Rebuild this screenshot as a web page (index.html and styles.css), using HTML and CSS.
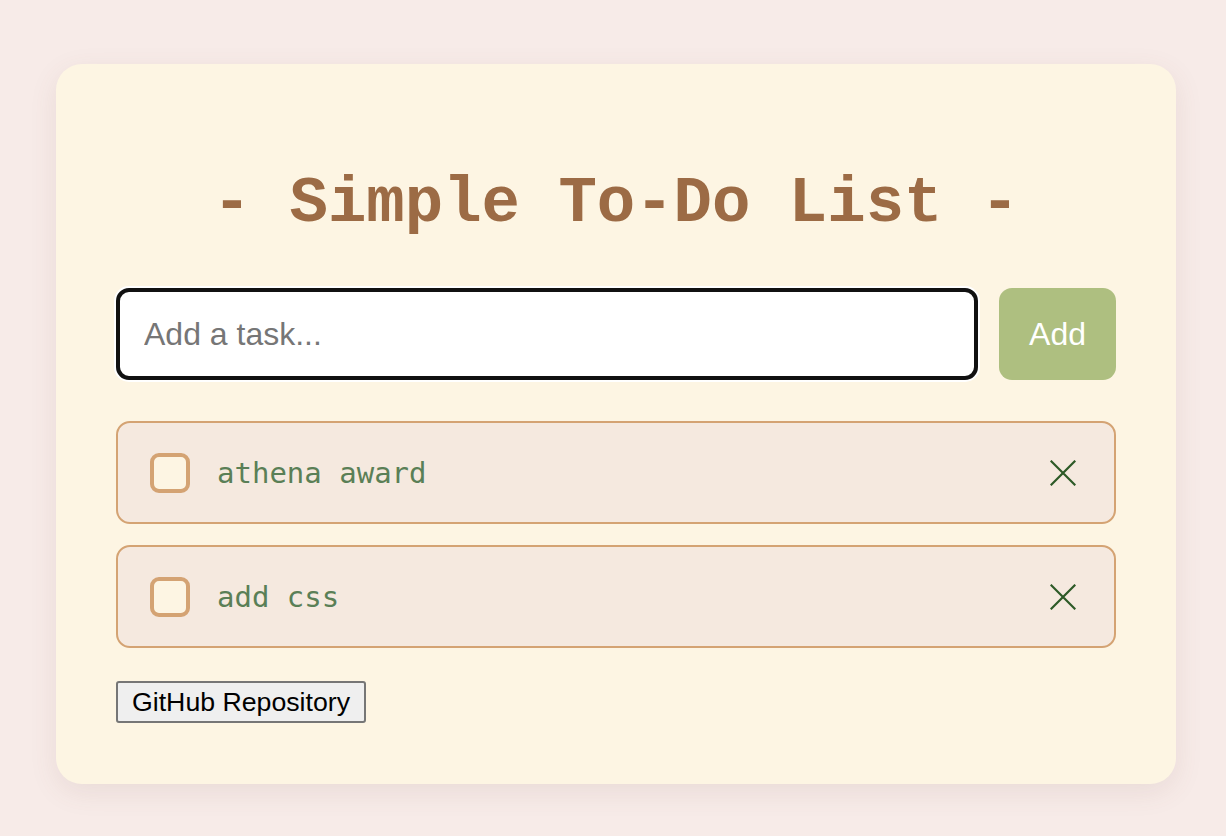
FILE: index.html
```html
<!DOCTYPE html>
<html lang="en">
<head>
<meta charset="utf-8">
<title>Simple To-Do List</title>
<link rel="stylesheet" href="styles.css">
</head>
<body>
<main class="card">
  <h1 class="title">- Simple To-Do List -</h1>
  <form class="add-row" onsubmit="return false">
    <input class="task-input" type="text" placeholder="Add a task...">
    <button class="add-btn" type="submit">Add</button>
  </form>
  <ul class="tasks">
    <li class="task">
      <span class="check"></span>
      <span class="task-text">athena award</span>
      <button class="del" aria-label="Delete">
        <svg viewBox="0 0 26 26" width="26" height="26"><path d="M1.5 1.5L24.5 24.5M24.5 1.5L1.5 24.5" stroke="#2d5a27" stroke-width="2.2" stroke-linecap="square" fill="none"/></svg>
      </button>
    </li>
    <li class="task">
      <span class="check"></span>
      <span class="task-text">add css</span>
      <button class="del" aria-label="Delete">
        <svg viewBox="0 0 26 26" width="26" height="26"><path d="M1.5 1.5L24.5 24.5M24.5 1.5L1.5 24.5" stroke="#2d5a27" stroke-width="2.2" stroke-linecap="square" fill="none"/></svg>
      </button>
    </li>
  </ul>
  <button class="repo-btn" type="button">GitHub Repository</button>
</main>
</body>
</html>
```

FILE: styles.css
```css
html, body {
  margin: 0;
  padding: 0;
}
body {
  background: #f7ebe8;
  font-family: "Liberation Sans", Arial, sans-serif;
  padding: 64px 50px 52px 56px;
  min-height: 836px;
  box-sizing: border-box;
}
.card {
  width: 1120px;
  height: 720px;
  box-sizing: border-box;
  background: #fdf5e3;
  border-radius: 26px;
  padding: 104px 60px 60px;
  box-shadow: 0 8px 28px rgba(120, 80, 70, 0.10);
  display: flex;
  flex-direction: column;
}
.title {
  font-family: "Liberation Mono", "Courier New", monospace;
  font-weight: bold;
  font-size: 64px;
  line-height: 72px;
  color: #9c6b45;
  text-align: center;
  margin: 0 0 48px;
}
.add-row {
  display: flex;
  gap: 21px;
  margin: 0;
}
.task-input {
  flex: 1;
  height: 92px;
  box-sizing: border-box;
  border: 4px solid #111;
  border-radius: 13px;
  background: #fff;
  padding: 0 24px;
  font-family: "Liberation Sans", Arial, sans-serif;
  font-size: 32px;
  color: #222;
  box-shadow: 0 0 0 2px #fff;
  outline: none;
}
.task-input::placeholder {
  color: #767676;
}
.add-btn {
  width: 117px;
  height: 92px;
  border: none;
  border-radius: 13px;
  background: #aebf80;
  color: #fff;
  font-family: "Liberation Sans", Arial, sans-serif;
  font-size: 32px;
  padding: 0;
}
.tasks {
  list-style: none;
  margin: 41px 0 0;
  padding: 0;
  display: flex;
  flex-direction: column;
  gap: 21px;
}
.task {
  display: flex;
  align-items: center;
  height: 103px;
  box-sizing: border-box;
  border: 2px solid #d4a373;
  border-radius: 14px;
  background: #f5e9df;
  padding: 0 32px;
}
.check {
  width: 40px;
  height: 40px;
  box-sizing: border-box;
  border: 4px solid #d4a373;
  border-radius: 9px;
  background: #fdf5e3;
  flex: none;
}
.task-text {
  flex: 1;
  margin-left: 27px;
  font-family: "DejaVu Sans Mono", monospace;
  font-size: 29px;
  color: #5a7f56;
}
.del {
  background: none;
  border: none;
  padding: 0;
  width: 26px;
  height: 26px;
  margin-right: 6px;
  display: flex;
}
.repo-btn {
  align-self: flex-start;
  margin-top: 33px;
  height: 42px;
  padding: 0 14px;
  font-family: "Liberation Sans", Arial, sans-serif;
  font-size: 26.7px;
  color: #000;
  background: #efefef;
  border: 2px solid #767676;
  border-radius: 3px;
}
```
